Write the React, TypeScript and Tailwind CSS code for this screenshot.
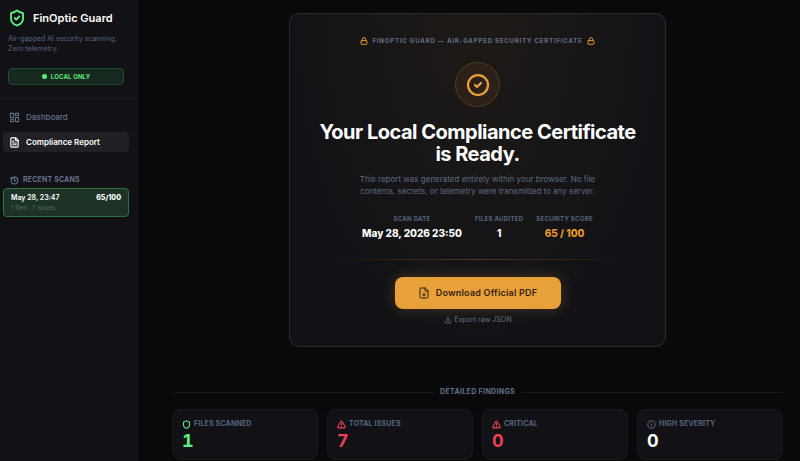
import type { ReactNode } from "react";
import {
  CircleCheck,
  Download,
  FileDown,
  FileText,
  History,
  Info,
  LayoutDashboard,
  Lock,
  Shield,
  ShieldCheck,
  TriangleAlert,
} from "lucide-react";

function Detail({ label, value, accent = false }: { label: string; value: string; accent?: boolean }) {
  return (
    <div>
      <dt className="text-[6px] leading-2 font-bold tracking-wider text-[#566580]">{label}</dt>
      <dd className={`mt-[2px] text-[10px] leading-4 font-extrabold ${accent ? "text-[#e8982e]" : "text-white"}`}>{value}</dd>
    </div>
  );
}

function Stat({ icon, label, value, color }: { icon: ReactNode; label: string; value: string; color: string }) {
  return (
    <section className="rounded-lg border border-[#18181d] bg-[#121216] px-[9px] pt-2 pb-[9px]">
      <h3 className="flex items-center gap-[3px] text-[7px] leading-3 font-bold tracking-wide text-[#566580]">
        {icon}
        {label}
      </h3>
      <p className={`mt-[2px] text-[18px] leading-[18px] font-bold tabular-nums ${color}`}>{value}</p>
    </section>
  );
}

export default function App() {
  return (
    <div className="flex min-h-screen bg-[#09090b] font-['Inter','Liberation_Sans',sans-serif] text-white antialiased">
      <aside className="w-[138px] shrink-0 border-r border-[#151519] bg-[#121216]">
        <header className="border-b border-[#1b1b20] px-2 pt-2 pb-[13px]">
          <div className="flex items-center gap-[7px]">
            <ShieldCheck className="size-[18px] text-[#5bed7e]" strokeWidth={2.5} />
            <h1 className="text-[11px] leading-5 font-semibold">FinOptic Guard</h1>
          </div>
          <p className="mt-[6px] text-[7px] leading-[10px] text-[#566580]">
            Air-gapped AI security scanning.
            <br />
            Zero telemetry.
          </p>
          <div className="mt-[14px] mr-[5px] flex h-[17px] items-center justify-center gap-1 rounded border border-[#214c31] bg-[#17281f] text-[6px] font-bold tracking-wide text-[#5bed7e]">
            <span className="size-[5px] rounded-full bg-[#5bed7e]" />
            LOCAL ONLY
          </div>
        </header>

        <nav className="flex flex-col gap-[5px] px-[3px] pt-2">
          <a href="#dashboard" className="flex h-5 items-center gap-[6px] rounded px-[6px] text-[8px] font-medium text-[#64718a]">
            <LayoutDashboard className="size-[11px]" strokeWidth={2.25} />
            Dashboard
          </a>
          <a href="#report" aria-current="page" className="mr-[5px] flex h-5 items-center gap-[6px] rounded bg-[#212125] px-[6px] text-[8px] font-semibold">
            <FileText className="size-[11px]" strokeWidth={2.5} />
            Compliance Report
          </a>
        </nav>

        <section className="px-[3px] pt-[21px]">
          <h2 className="flex items-center gap-1 px-[7px] text-[7px] leading-[14px] font-bold tracking-wide text-[#64718a]">
            <History className="size-[9px]" strokeWidth={2.75} />
            RECENT SCANS
          </h2>
          <button className="mt-px block w-[126px] rounded border border-[#2b7442] bg-[#1d3326] px-[7px] pt-[3px] pb-[3px] text-left">
            <span className="flex justify-between text-[7px] leading-[11px] font-semibold">
              <span>May 28, 23:47</span>
              <span className="font-extrabold">65/100</span>
            </span>
            <span className="block text-[6px] leading-[10px] text-[#506b60]">1 files · 7 issues</span>
          </button>
        </section>
      </aside>

      <main className="min-w-0 flex-1 pt-[13px] pr-[17px] pl-[34px]">
        <section className="mx-auto max-w-[377px] rounded-[10px] border border-[#332a1d] bg-[#121216] bg-[radial-gradient(ellipse_at_top,#1e1a17_0%,#121216_70%)] px-4 pt-[22px] pb-5 text-center">
          <p className="flex items-center justify-center gap-1 text-[6px] leading-[10px] font-bold tracking-[0.14em] text-[#64718a]">
            <Lock className="size-2 text-[#e8982e]" strokeWidth={3} />
            FINOPTIC GUARD — AIR-GAPPED SECURITY CERTIFICATE
            <Lock className="size-2 text-[#e8982e]" strokeWidth={3} />
          </p>
          <div className="mx-auto mt-4 flex size-[45px] items-center justify-center rounded-full border border-[#553b1c] bg-[#2b2118]">
            <CircleCheck className="size-6 text-[#e8a03a]" strokeWidth={2.25} />
          </div>
          <h2 className="mt-[14px] text-[20px] leading-[22px] font-bold tracking-tight">
            Your Local Compliance Certificate
            <br />
            is Ready.
          </h2>
          <p className="mt-2 text-[8px] leading-3 text-[#5d6a82]">
            This report was generated entirely within your browser. No file
            <br />
            contents, secrets, or telemetry were transmitted to any server.
          </p>
          <dl className="mt-[18px] flex justify-center gap-[13px]">
            <Detail label="SCAN DATE" value="May 28, 2026 23:50" />
            <Detail label="FILES AUDITED" value="1" />
            <Detail label="SECURITY SCORE" value="65 / 100" accent />
          </dl>
          <div className="mx-6 mt-[18px] h-px bg-linear-to-r from-transparent via-[#513619] to-transparent" />
          <button className="mx-auto mt-[17px] flex h-8 w-[166px] items-center justify-center gap-[6px] rounded-lg bg-[#e8a03a] text-[9px] font-semibold tracking-wide text-[#33230f] shadow-[0_0_14px_#e8a03a40]">
            <FileDown className="size-3" />
            Download Official PDF
          </button>
          <button className="mx-auto mt-[5px] flex h-3 items-center gap-[3px] text-[7px] text-[#64718a]">
            <Download className="size-2" strokeWidth={2.5} />
            Export raw JSON
          </button>
        </section>

        <div className="mt-[39px] flex items-center gap-[6px]">
          <span className="h-px flex-1 bg-[#17171b]" />
          <h2 className="text-[7px] leading-3 font-bold tracking-wider text-[#64718a]">DETAILED FINDINGS</h2>
          <span className="h-px flex-1 bg-[#17171b]" />
        </div>
        <div className="mt-[11px] grid grid-cols-4 gap-[9px]">
          <Stat icon={<Shield className="size-[9px] text-[#5bed7e]" strokeWidth={2.75} />} label="FILES SCANNED" value="1" color="text-[#5bed7e]" />
          <Stat icon={<TriangleAlert className="size-[9px] text-[#ef4050]" strokeWidth={2.75} />} label="TOTAL ISSUES" value="7" color="text-[#ef4058]" />
          <Stat icon={<TriangleAlert className="size-[9px] text-[#ef4050]" strokeWidth={2.75} />} label="CRITICAL" value="0" color="text-[#ef4058]" />
          <Stat icon={<Info className="size-[9px]" strokeWidth={2.75} />} label="HIGH SEVERITY" value="0" color="text-white" />
        </div>
      </main>
    </div>
  );
}
